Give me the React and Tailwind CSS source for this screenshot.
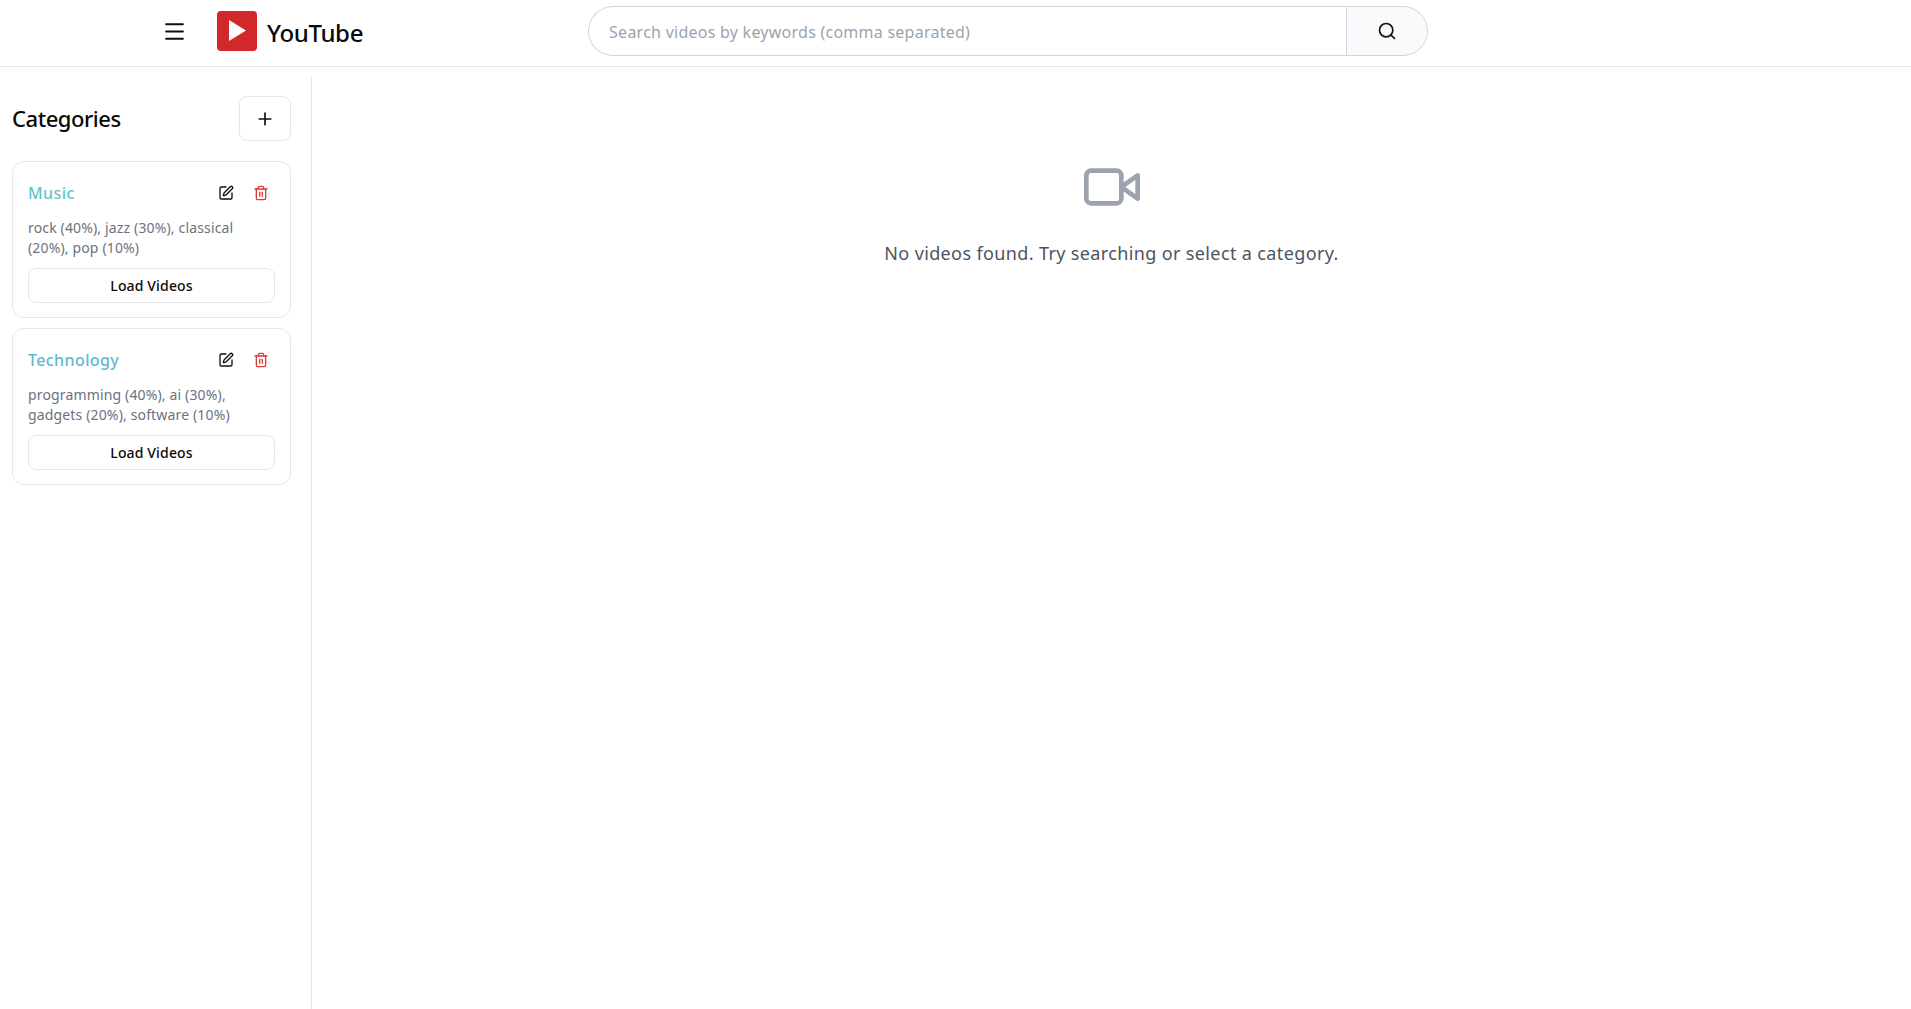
import React from "react";
import { Menu, Search, Plus, SquarePen, Trash2 } from "lucide-react";
import { FiVideo } from "react-icons/fi";

function Card({ title, color, text }) {
  return (
    <div className="rounded-xl border border-[#e5e7eb] bg-white px-[15px] pt-[15px] pb-[14px]">
      <div className="flex items-center justify-between h-[32px]">
        <h3 className={`text-[16px] leading-[24px] font-medium tracking-[0.4px] ${color}`}>{title}</h3>
        <div className="flex items-center mr-[-3px]">
          <button className="w-[35px] h-[32px] flex items-center justify-center text-[#0f0f0f]"><SquarePen size={16} strokeWidth={2} /></button>
          <button className="w-[35px] h-[32px] flex items-center justify-center text-[#e03a3a]"><Trash2 size={16} strokeWidth={2} /></button>
        </div>
      </div>
      <p className="mt-[9px] text-[14px] leading-[20px] text-[#6b7280] tracking-[0.15px]">{text}</p>
      <button className="mt-[10px] w-full h-[35px] rounded-lg border border-[#e5e7eb] bg-white text-[14px] font-medium text-[#0a0a0a] tracking-[0.15px]">Load Videos</button>
    </div>
  );
}

export default function App() {
  return (
    <div className="h-[1009px] overflow-hidden bg-white flex flex-col font-['Noto_Sans','Open_Sans',sans-serif]">
      <header className="h-[67px] shrink-0 border-b border-[#e5e7eb] flex items-center pl-[154px] pb-[4px]">
        <button className="w-[40px] h-[40px] flex items-center justify-center text-[#0f0f0f]"><Menu size={25} strokeWidth={2} /></button>
        <div className="ml-[23px] w-[40px] h-[40px] rounded-[4px] bg-[#d2272b] flex items-center justify-center">
          <svg width="20" height="22" viewBox="0 0 20 22"><polygon points="2,0 19,10.5 2,21" fill="#fff" /></svg>
        </div>
        <span className="ml-[10px] text-[24px] leading-[32px] font-medium text-[#0a0a0a] tracking-[-0.35px] mt-[3px]">YouTube</span>
        <div className="ml-[225px] w-[840px] h-[50px] flex">
          <div className="flex-1 h-full rounded-l-full border border-r-0 border-[#d1d5db] flex items-center pl-[20px] pt-[2px] text-[16px] text-[#9ca3af] tracking-[0.25px]">Search videos by keywords (comma separated)</div>
          <button className="w-[82px] h-full rounded-r-full border border-[#d1d5db] bg-[#f9fafb] flex items-center justify-center text-[#0f0f0f]"><Search size={20} strokeWidth={2} /></button>
        </div>
      </header>
      <div className="flex flex-1 min-h-0">
        <aside className="w-[312px] shrink-0 mt-[9px] border-r border-[#e5e7eb] pl-[12px] pr-[20px]">
          <div className="flex items-center justify-between pt-[20px] pb-[20px]">
            <h2 className="text-[22px] leading-[32px] font-medium text-[#0a0a0a] tracking-[-0.45px] mb-[2px]">Categories</h2>
            <button className="w-[52px] h-[45px] rounded-lg border border-[#e5e7eb] bg-white flex items-center justify-center text-[#0f0f0f]"><Plus size={20} strokeWidth={2} /></button>
          </div>
          <div className="flex flex-col gap-[10px]">
            <Card title="Music" color="text-[#5fc4cb]" text="rock (40%), jazz (30%), classical (20%), pop (10%)" />
            <Card title="Technology" color="text-[#5fb8d2]" text="programming (40%), ai (30%), gadgets (20%), software (10%)" />
          </div>
        </aside>
        <main className="flex-1 flex flex-col items-center pt-[92px]">
          <FiVideo size={56} className="text-[#9ca3af]" />
          <p className="mt-[24px] text-[18px] leading-[28px] text-[#4b5563] tracking-[0.37px]">No videos found. Try searching or select a category.</p>
        </main>
      </div>
    </div>
  );
}
